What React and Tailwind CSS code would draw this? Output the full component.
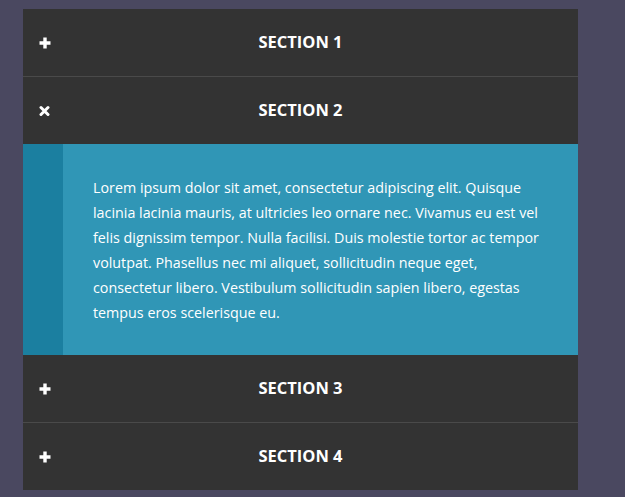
const sections = [
  { id: 1, title: "SECTION 1", open: false },
  {
    id: 2,
    title: "SECTION 2",
    open: true,
    body: "Lorem ipsum dolor sit amet, consectetur adipiscing elit. Quisque lacinia lacinia mauris, at ultricies leo ornare nec. Vivamus eu est vel felis dignissim tempor. Nulla facilisi. Duis molestie tortor ac tempor volutpat. Phasellus nec mi aliquet, sollicitudin neque eget, consectetur libero. Vestibulum sollicitudin sapien libero, egestas tempus eros scelerisque eu.",
  },
  { id: 3, title: "SECTION 3", open: false },
  { id: 4, title: "SECTION 4", open: false },
];

// Chunky plus / cross icons
const PlusIcon = () => (
  <svg width="12" height="12" viewBox="0 0 12 12" fill="white">
    <path d="M4.3 0.5h3.4v3.8h3.8v3.4h-3.8v3.8h-3.4v-3.8h-3.8v-3.4h3.8z" />
  </svg>
);

const CrossIcon = () => (
  <svg width="11" height="11" viewBox="0 0 11 11" fill="none" stroke="white" strokeWidth="3" strokeLinecap="round">
    <path d="M2 2l7 7M9 2l-7 7" />
  </svg>
);

export default function App() {
  return (
    <div
      className="min-h-screen bg-[#4a4860] pt-[9px] pl-[23px]"
      style={{ fontFamily: '"Open Sans", "Noto Sans", sans-serif' }}
    >
      <div className="w-[555px] bg-[#333333]">
        {sections.map((s, i) => (
          <div key={s.id}>
            {/* Header */}
            <div
              className={
                "relative flex items-center justify-center text-white " +
                (!s.open && i < sections.length - 1
                  ? "h-[68px] border-b border-[#4a4a4a]"
                  : "h-[67px]")
              }
            >
              <span className="absolute left-[16px] top-1/2 flex -translate-y-1/2">
                {s.open ? <CrossIcon /> : <PlusIcon />}
              </span>
              <h3 className="text-[16.5px] font-bold">{s.title}</h3>
            </div>

            {/* Content */}
            {s.open && (
              <div className="flex bg-[#3096b6]">
                <div className="w-[40px] shrink-0 bg-[#1b7fa0]" />
                <p className="w-[485px] pl-[30px] pt-[31px] pb-[30px] text-[14.3px] leading-[25px] text-white">
                  {s.body}
                </p>
              </div>
            )}
          </div>
        ))}
      </div>
    </div>
  );
}
